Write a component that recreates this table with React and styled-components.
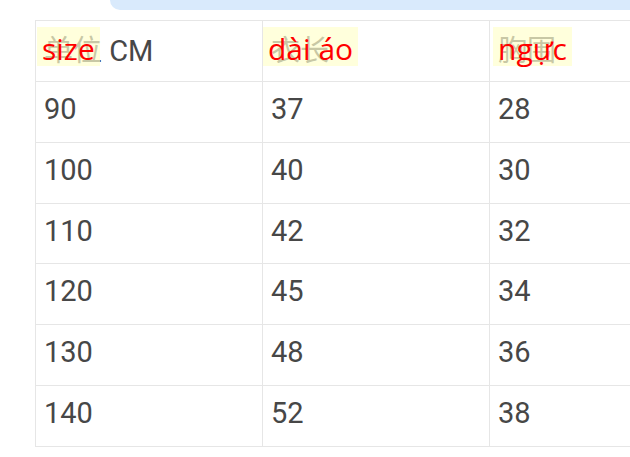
import React from 'react';
import styled, { createGlobalStyle } from 'styled-components';

const GlobalStyle = createGlobalStyle`
  html, body {
    margin: 0;
    padding: 0;
    background: #ffffff;
    overflow: hidden;
  }
`;

const Page = styled.div`
  width: 630px;
  height: 457px;
  display: flex;
  flex-direction: column;
  gap: 10px;
`;

const Bubble = styled.div`
  margin-left: 110px;
  height: 10px;
  background: #d9eafc;
  border-bottom-left-radius: 12px;
`;

const SizeTable = styled.div`
  margin-left: 35px;
  display: grid;
  grid-template-columns: repeat(3, 227px);
  width: max-content;
  border-top: 1px solid #e6e6e6;
  border-left: 1px solid #e6e6e6;
`;

const Cell = styled.div`
  position: relative;
  box-sizing: border-box;
  height: 60.86px;
  display: flex;
  align-items: center;
  padding: 0 0 6px 8px;
  border-right: 1px solid #e6e6e6;
  border-bottom: 1px solid #e6e6e6;
  font-family: Roboto, "Noto Sans CJK SC", sans-serif;
  font-size: 29px;
  color: #474747;
  white-space: nowrap;
`;

// translation label laid over the original header text
const Overlay = styled.span`
  position: absolute;
  top: 6px;
  left: ${(p) => p.$left}px;
  box-sizing: border-box;
  height: 39px;
  padding: 4px 5px 0;
  background: rgba(255, 255, 205, 0.7);
  color: #ff0000;
  font-family: "Open Sans", "Liberation Sans", sans-serif;
  font-size: 30px;
  line-height: 35px;
`;

const headers = [
  { text: '单位 CM', label: 'size', left: 1 },
  { text: '衣长', label: 'dài áo', left: 0 },
  { text: '胸围', label: 'ngực', left: 3 },
];

const rows = [
  [90, 37, 28],
  [100, 40, 30],
  [110, 42, 32],
  [120, 45, 34],
  [130, 48, 36],
  [140, 52, 38],
];

export default function App() {
  return (
    <>
      <GlobalStyle />
      <Page>
        <Bubble />
        <SizeTable>
          {headers.map((h) => (
            <Cell key={h.label}>
              {h.text}
              <Overlay $left={h.left}>{h.label}</Overlay>
            </Cell>
          ))}
          {rows.map((row) =>
            row.map((v, i) => <Cell key={`${row[0]}-${i}`}>{v}</Cell>)
          )}
        </SizeTable>
      </Page>
    </>
  );
}
